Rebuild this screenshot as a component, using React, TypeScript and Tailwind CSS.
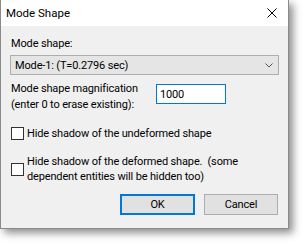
import React from "react";

const font = { fontFamily: 'Roboto, "Liberation Sans", Arial, sans-serif' };

function Checkbox() {
  return <div className="w-[13px] h-[13px] border border-[#333333] bg-white shrink-0" />;
}

export default function App() {
  return (
    <div className="w-[304px] h-[244px] bg-white relative overflow-hidden text-[11px] tracking-[-0.15px] text-black" style={font}>
      <div className="w-[289px] h-[229px] border border-[#8a8a8a] border-t-0 shadow-[4px_4px_8px_rgba(0,0,0,0.45)] flex flex-col bg-[#f0f0f0]">
        <div className="h-[26px] bg-white flex items-center justify-between pl-[5px] pr-[10px]">
          <span className="text-[11.5px] tracking-normal leading-none mt-[1px]">Mode Shape</span>
          <svg width="10" height="10" viewBox="0 0 10 10" className="mr-[1px]">
            <path d="M0.5 0.5 L9.5 9.5 M9.5 0.5 L0.5 9.5" stroke="#000" strokeWidth="1" fill="none" />
          </svg>
        </div>
        <div className="flex-1 px-[9px] pt-[10px] flex flex-col">
          <div className="leading-[15px] h-[15px] pl-[1px]">Mode shape:</div>
          <div className="mt-[4px] h-[20px] w-[269px] border border-[#adadad] bg-[#e5e5e5] flex items-center justify-between pl-[4px] pr-[5px]">
            <span className="leading-none">Mode-1: (T=0.2796 sec)</span>
            <svg width="8" height="5" viewBox="0 0 8 5">
              <path d="M0.5 0.5 L4 4 L7.5 0.5" stroke="#555" strokeWidth="1" fill="none" />
            </svg>
          </div>
          <div className="mt-[6px] flex items-start">
            <div className="leading-[16px] w-[146px] pl-[1px]">
              Mode shape magnification
              <br />
              (enter 0 to erase existing):
            </div>
            <div className="mt-[3px] w-[70px] h-[20px] border border-[#0078d7] bg-white flex items-center pl-[3px]">
              <span className="leading-none">1000</span>
            </div>
          </div>
          <div className="mt-[13px] flex items-center gap-[3px] pl-[1px]">
            <Checkbox />
            <span className="leading-[15px]">Hide shadow of the undeformed shape</span>
          </div>
          <div className="mt-[13px] flex items-center gap-[3px] pl-[1px]">
            <Checkbox />
            <span className="leading-[15px]">
              Hide shadow of the deformed shape.&nbsp; (some
              <br />
              dependent entities will be hidden too)
            </span>
          </div>
          <div className="mt-[10px] flex justify-end gap-[9px] pr-[1px]">
            <div className="w-[75px] h-[21px] border-2 border-[#0078d7] bg-[#e1e1e1] flex items-center justify-center">
              <span className="leading-none">OK</span>
            </div>
            <div className="w-[74px] h-[21px] border border-[#adadad] bg-[#e1e1e1] flex items-center justify-center">
              <span className="leading-none">Cancel</span>
            </div>
          </div>
        </div>
      </div>
    </div>
  );
}
